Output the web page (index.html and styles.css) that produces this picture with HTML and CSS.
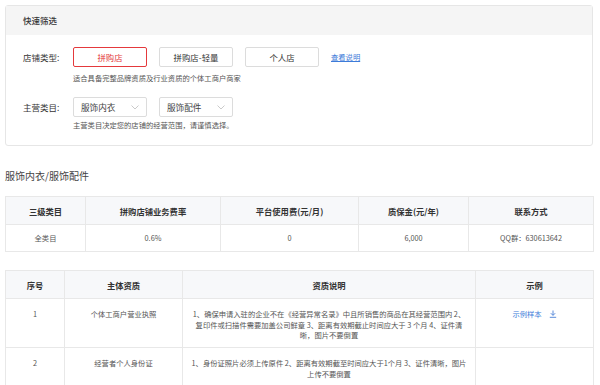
FILE: index.html
```html
<!DOCTYPE html>
<html lang="zh-CN">
<head>
<meta charset="utf-8">
<link rel="stylesheet" href="styles.css">
</head>
<body>
<div class="page">
  <section class="card">
    <div class="card-head">快速筛选</div>
    <div class="card-body">
      <div class="row">
        <span class="label">店铺类型:</span>
        <span class="btn btn-active">拼购店</span>
        <span class="btn">拼购店-轻量</span>
        <span class="btn">个人店</span>
        <a class="link">查看说明</a>
      </div>
      <div class="hint hint-1">适合具备完整品牌资质及行业资质的个体工商户商家</div>
      <div class="row row-2">
        <span class="label">主营类目:</span>
        <span class="select">服饰内衣<svg class="chev" viewBox="0 0 8 5" width="8" height="5"><path d="M0.5 0.5 L4 4 L7.5 0.5" fill="none" stroke="#c4c4c4" stroke-width="0.9"/></svg></span>
        <span class="select">服饰配件<svg class="chev" viewBox="0 0 8 5" width="8" height="5"><path d="M0.5 0.5 L4 4 L7.5 0.5" fill="none" stroke="#c4c4c4" stroke-width="0.9"/></svg></span>
      </div>
      <div class="hint hint-2">主营类目决定您的店铺的经营范围，请谨慎选择。</div>
    </div>
  </section>

  <h2 class="section-title">服饰内衣/服饰配件</h2>

  <table class="tbl tbl-fee">
    <colgroup>
      <col class="c80"><col class="c135"><col class="c138"><col class="c110"><col class="c125">
    </colgroup>
    <thead>
      <tr><th>三级类目</th><th>拼购店铺业务费率</th><th>平台使用费(元/月)</th><th>质保金(元/年)</th><th>联系方式</th></tr>
    </thead>
    <tbody>
      <tr><td>全类目</td><td>0.6%</td><td>0</td><td>6,000</td><td>QQ群：630613642</td></tr>
    </tbody>
  </table>

  <table class="tbl tbl-doc">
    <colgroup>
      <col class="c59"><col class="c118"><col class="c293"><col class="c118">
    </colgroup>
    <thead>
      <tr><th>序号</th><th>主体资质</th><th>资质说明</th><th>示例</th></tr>
    </thead>
    <tbody>
      <tr class="r1">
        <td>1</td>
        <td>个体工商户营业执照</td>
        <td>1、确保申请入驻的企业不在《经营异常名录》中且所销售的商品在其经营范围内 2、<br>复印件或扫描件需要加盖公司鲜章 3、距离有效期截止时间应大于 3 个月 4、证件清<br>晰，图片不要倒置</td>
        <td><a class="link sample">示例样本<svg class="dl" viewBox="0 0 8 8" width="8" height="8"><path d="M4 0.5 V5.2 M1.8 3.2 L4 5.4 L6.2 3.2 M0.8 7.3 H7.2" fill="none" stroke="#4a7fd6" stroke-width="0.9"/></svg></a></td>
      </tr>
      <tr class="r2">
        <td>2</td>
        <td>经营者个人身份证</td>
        <td>1、身份证照片必须上传原件 2、距离有效期截至时间应大于1个月 3、证件清晰，图片<br>上传不要倒置</td>
        <td></td>
      </tr>
    </tbody>
  </table>
</div>
</body>
</html>
```

FILE: styles.css
```css
* { box-sizing: border-box; }
html, body { margin: 0; padding: 0; background: #fff; }
body {
  font-family: "Noto Sans CJK SC", "Noto Sans", sans-serif;
  color: #333;
  overflow: hidden;
}
.page { padding: 5px 7px 0 5px; width: 600px; }

.card {
  border: 1px solid #e6e6e6;
  border-radius: 3px;
  height: 141px;
}
.card-head {
  height: 29px;
  line-height: 29px;
  background: #f5f5f5;
  padding-left: 17px;
  font-size: 8.5px;
  font-weight: 500;
  color: #333;
}
.card-body { padding: 12px 0 0 17px; }
.row { display: flex; align-items: center; height: 20px; }
.row-2 { margin-top: 14px; }
.label {
  width: 50px;
  font-size: 8.5px;
  line-height: 20px;
  color: #333;
}
.btn {
  width: 74px;
  height: 20px;
  border: 1px solid #dcdcdc;
  border-radius: 2px;
  margin-right: 12px;
  font-size: 8.4px;
  line-height: 18px;
  text-align: center;
  color: #333;
}
.btn-active { border-color: #e4393c; color: #e4393c; }
.link {
  color: #3d7bd9;
  font-size: 7.3px;
  line-height: 12px;
  text-decoration: underline;
}
.select {
  position: relative;
  width: 74px;
  height: 20px;
  border: 1px solid #dcdcdc;
  border-radius: 2px;
  margin-right: 12px;
  padding-left: 7px;
  font-size: 8.6px;
  line-height: 18px;
  color: #444;
}
.chev { position: absolute; right: 7px; top: 7px; }
.hint {
  margin-left: 50px;
  font-size: 7.3px;
  line-height: 10px;
  color: #555;
}
.hint-1 { margin-top: 6px; }
.hint-2 { margin-top: 3px; }

.section-title {
  margin: 23px 0 13px 0;
  font-size: 10px;
  line-height: 14px;
  font-weight: 400;
  color: #444;
}

.tbl {
  width: 588px;
  table-layout: fixed;
  border-collapse: collapse;
  border: 1px solid #e8e8e8;
}
.tbl th, .tbl td {
  border: 1px solid #e8e8e8;
  text-align: center;
  padding: 0 6px;
}
.tbl th {
  background: #f7f8fa;
  height: 28px;
  font-size: 8.3px;
  font-weight: 700;
  color: #333;
}
.tbl td {
  font-size: 7.3px;
  color: #555;
}
.tbl-fee td { height: 27px; }
.tbl-doc { margin-top: 18px; }
.tbl-doc td {
  vertical-align: top;
  padding-top: 10px;
  line-height: 10.5px;
}
.tbl-doc .r1 td { height: 49px; }
.tbl-doc .r2 td { height: 49px; }
.sample { text-decoration: none; font-size: 7.3px; line-height: 10.5px; }
.dl { margin-left: 7px; vertical-align: -1px; }

.c80 { width: 80px; }
.c135 { width: 135px; }
.c138 { width: 138px; }
.c110 { width: 110px; }
.c125 { width: 125px; }
.c59 { width: 59px; }
.c118 { width: 118px; }
.c293 { width: 293px; }
```
